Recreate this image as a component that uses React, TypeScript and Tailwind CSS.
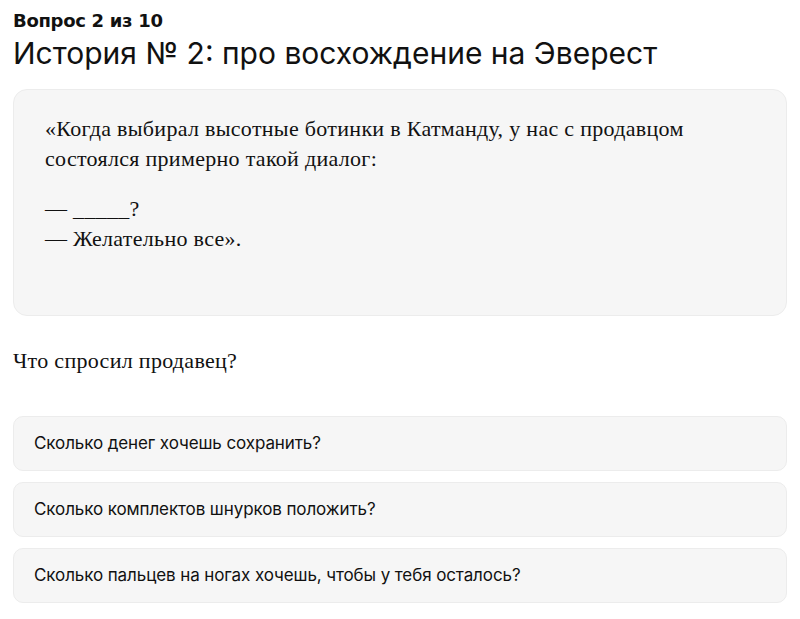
const options = [
  "Сколько денег хочешь сохранить?",
  "Сколько комплектов шнурков положить?",
  "Сколько пальцев на ногах хочешь, чтобы у тебя осталось?",
];

export default function App() {
  return (
    <div className="min-h-screen bg-white px-[13px] pt-[9px] text-[#111]">
      <div className="font-['DejaVu_Sans',sans-serif] text-[18px] font-bold leading-[24px] tracking-[-0.3px]">
        Вопрос 2 из 10
      </div>
      <h1 className="font-['Inter',sans-serif] text-[30px] font-normal leading-[40px]">
        История № 2: про восхождение на Эверест
      </h1>

      {/* Story card */}
      <div className="mt-[16px] h-[227px] rounded-[14px] border border-[#ececec] bg-[#f6f6f6] px-[31px] pt-[24px] font-['Liberation_Serif',serif] text-[22px] leading-[30px] tracking-[0.3px]">
        <p>
          «Когда выбирал высотные ботинки в Катманду, у нас с продавцом
          <br />
          состоялся примерно такой диалог:
        </p>
        <p className="mt-[20px]">
          — _____?
          <br />— Желательно все».
        </p>
      </div>

      <p className="mt-[30px] font-['Liberation_Serif',serif] text-[22px] leading-[30px] tracking-[0.3px]">
        Что спросил продавец?
      </p>

      {/* Answer options */}
      <div className="mt-[40px] flex flex-col gap-[11px]">
        {options.map((o) => (
          <div
            key={o}
            className="flex h-[55px] items-center rounded-[10px] border border-[#ececec] bg-[#f6f6f6] px-[20px] font-['Inter',sans-serif] text-[17px] tracking-[-0.1px]"
          >
            {o}
          </div>
        ))}
      </div>
    </div>
  );
}
